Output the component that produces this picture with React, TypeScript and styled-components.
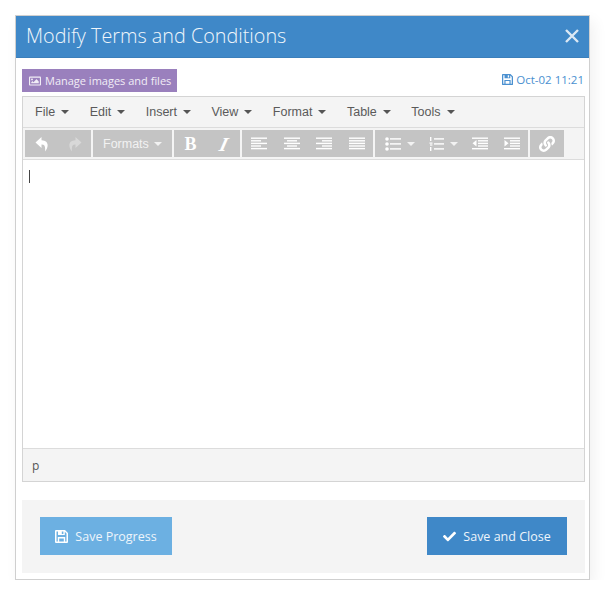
import React from "react";
import styled, { createGlobalStyle } from "styled-components";
import { FaCheck, FaLink, FaRegImage } from "react-icons/fa";

const GlobalStyle = createGlobalStyle`
    html, body {
        margin: 0;
        padding: 0;
        background: #fff;
    }
`;

const Page = styled.div`
    padding: 15px 0 0 15px;
    font-family: "Open Sans", sans-serif;
`;

const Modal = styled.div`
    box-sizing: border-box;
    width: 575px;
    height: 565px;
    border: 1px solid #cfcfcf;
    background: #fff;
    box-shadow: 4px 6px 14px rgba(0, 0, 0, 0.06);
    display: flex;
    flex-direction: column;
`;

const Header = styled.div`
    height: 42px;
    background: #3f88c8;
    border-bottom: 1px solid #3b7fbb;
    box-sizing: border-box;
    display: flex;
    align-items: center;
    justify-content: space-between;
    padding: 0 10px 2px 10px;
`;

const Title = styled.h1`
    margin: 0;
    font-size: 19.8px;
    font-weight: 300;
    line-height: 28px;
    color: #f0f6fb;
`;

const Body = styled.div`
    flex: 1;
    display: flex;
    flex-direction: column;
    padding: 11px 4px 6px 6px;
`;

const TopRow = styled.div`
    display: flex;
    justify-content: space-between;
    height: 23px;
    margin-bottom: 4px;
`;

const ManageButton = styled.div`
    width: 155px;
    background: #9a80bd;
    color: #f1edf6;
    font-size: 11px;
    display: flex;
    align-items: center;
    gap: 4px;
    padding-left: 7px;
    box-sizing: border-box;
    white-space: nowrap;
    svg {
        font-size: 12px;
    }
`;

const Saved = styled.div`
    color: #4a90d0;
    font-size: 11.5px;
    display: flex;
    align-items: center;
    gap: 3px;
    padding-right: 1px;
    padding-bottom: 2px;
`;

const Editor = styled.div`
    box-sizing: border-box;
    height: 386px;
    border: 1px solid #d4d4d4;
    display: flex;
    flex-direction: column;
`;

const MenuBar = styled.div`
    height: 31px;
    background: #f4f4f4;
    border-bottom: 1px solid #dcdcdc;
    box-sizing: border-box;
    display: flex;
    align-items: center;
    padding: 0 0 0 12px;
    gap: 20.5px;
`;

const MenuItem = styled.div`
    font-family: "Liberation Sans", sans-serif;
    font-size: 12.5px;
    color: #5a5a5a;
    display: flex;
    align-items: center;
    gap: 6px;
`;

const Caret = styled.span<{ $color?: string }>`
    display: inline-block;
    width: 0;
    height: 0;
    border-left: 4px solid transparent;
    border-right: 4px solid transparent;
    border-top: 4px solid ${(p) => p.$color || "#555"};
`;

const ToolBar = styled.div`
    height: 32px;
    background: #f4f4f4;
    border-bottom: 1px solid #dcdcdc;
    box-sizing: border-box;
    display: flex;
    gap: 2px;
    padding: 2px 0 0 2px;
`;

const ToolGroup = styled.div`
    height: 27px;
    background: #c4c4c4;
    color: #fff;
    display: flex;
    align-items: center;
`;

const ToolButton = styled.div<{ $width: number }>`
    width: ${(p) => p.$width}px;
    height: 100%;
    display: flex;
    align-items: center;
    justify-content: center;
`;

const SplitButton = styled.div<{ $width: number }>`
    width: ${(p) => p.$width}px;
    height: 100%;
    box-sizing: border-box;
    padding-left: 10px;
    display: flex;
    align-items: center;
    gap: 6px;
`;

const FormatsButton = styled.div`
    width: 79px;
    box-sizing: border-box;
    padding-left: 10px;
    font-family: "Liberation Sans", sans-serif;
    font-size: 12.5px;
    color: #f2f2f2;
    display: flex;
    align-items: center;
    gap: 5px;
`;

const Glyph = styled.span<{ $italic?: boolean }>`
    font-family: "Liberation Serif", serif;
    font-size: ${(p) => (p.$italic ? 20 : 18)}px;
    font-weight: 700;
    font-style: ${(p) => (p.$italic ? "italic" : "normal")};
    color: #fff;
    line-height: 1;
    transform: ${(p) => (p.$italic ? "skewX(-14deg)" : "none")};
`;

const Content = styled.div`
    flex: 1;
    background: #fff;
    padding: 10px 6px;
`;

const Cursor = styled.div`
    width: 1px;
    height: 13px;
    background: #444;
`;

const StatusBar = styled.div`
    height: 33px;
    background: #f4f4f4;
    border-top: 1px solid #dcdcdc;
    box-sizing: border-box;
    display: flex;
    align-items: center;
    padding-left: 9px;
    font-size: 12px;
    color: #555;
`;

const Footer = styled.div`
    margin-top: 18px;
    height: 73px;
    background: #f4f4f4;
    display: flex;
    align-items: flex-start;
    justify-content: space-between;
    padding: 17px 18px 0 18px;
    box-sizing: border-box;
`;

const FooterButton = styled.div<{ $bg: string; $width: number }>`
    width: ${(p) => p.$width}px;
    height: 38px;
    background: ${(p) => p.$bg};
    color: #eef5fb;
    font-size: 12.5px;
    display: flex;
    align-items: center;
    justify-content: center;
    gap: 7px;
    svg {
        font-size: 13px;
        color: #fff;
    }
`;

const CloseIcon = () => (
    <svg width="14" height="14" viewBox="0 0 14 14">
        <path d="M1 1 L13 13 M13 1 L1 13" stroke="#dbe8f4" strokeWidth="2.4" />
    </svg>
);

const SaveIcon = ({ size = 13 }: { size?: number }) => (
    <svg width={size} height={size} viewBox="0 0 13 13" fill="currentColor">
        <path
            fillRule="evenodd"
            d="M1 0 H10 L13 3 V12 A1 1 0 0 1 12 13 H1 A1 1 0 0 1 0 12 V1 A1 1 0 0 1 1 0 Z M1.5 1.5 V11.5 H2.8 V7 H10.2 V11.5 H11.5 V3.6 L9.8 1.8 V5 H3 V1.5 Z M4.2 8.4 V11.5 H8.8 V8.4 Z M6.8 1.6 V4 H8.4 V1.6 Z"
        />
    </svg>
);

const Undo = ({ flip }: { flip?: boolean }) => (
    <svg width="14" height="16" viewBox="0 0 14 16" style={flip ? { transform: "scaleX(-1)" } : undefined}>
        <path d="M6.5 1 L0.5 6.6 L6.5 12 V8.6 C9.6 8.4 10.6 10.6 10 15.5 C13.8 11 14.2 4.6 6.5 4.2 Z" fill="#fff" />
    </svg>
);

// x1,x2 pairs for each of the horizontal strokes in an alignment icon
const Lines = ({ rows }: { rows: [number, number][] }) => (
    <svg width="16" height="14" viewBox="0 0 16 14">
        {rows.map(([a, b], i) => (
            <rect key={i} x={a} y={i * 2.6 + 0.5} width={b - a} height="1.4" fill="#fff" />
        ))}
    </svg>
);

const BulletList = () => (
    <svg width="16" height="14" viewBox="0 0 16 14" fill="#fff">
        <circle cx="2" cy="2" r="1.8" />
        <circle cx="2" cy="7" r="1.8" />
        <circle cx="2" cy="12" r="1.8" />
        <rect x="5" y="1.2" width="11" height="1.4" />
        <rect x="5" y="6.2" width="11" height="1.4" />
        <rect x="5" y="11.2" width="11" height="1.4" />
    </svg>
);

const NumberList = () => (
    <svg width="15" height="14" viewBox="0 0 15 14" fill="#fff">
        <rect x="1" y="0" width="1.4" height="4" />
        <rect x="0.5" y="5.5" width="3" height="1.2" />
        <rect x="1" y="7.4" width="2.4" height="1.2" />
        <rect x="1" y="10" width="1.4" height="4" />
        <rect x="5" y="1.2" width="10" height="1.4" />
        <rect x="5" y="6.2" width="10" height="1.4" />
        <rect x="5" y="11.2" width="10" height="1.4" />
    </svg>
);

const Indent = ({ out }: { out?: boolean }) => (
    <svg width="16" height="14" viewBox="0 0 16 14" fill="#fff">
        <rect x="0" y="0.5" width="16" height="1.4" />
        <rect x="6" y="3.1" width="10" height="1.4" />
        <rect x="6" y="5.7" width="10" height="1.4" />
        <rect x="6" y="8.3" width="10" height="1.4" />
        <rect x="0" y="11" width="16" height="1.4" />
        <path d={out ? "M4.5 3 V9.5 L0.5 6.2 Z" : "M0.5 3 V9.5 L4.5 6.2 Z"} />
    </svg>
);

const Dimmed = styled.span`
    display: flex;
    opacity: 0.35;
`;

const menus = ["File", "Edit", "Insert", "View", "Format", "Table", "Tools"];

const App = (): JSX.Element => (
    <Page>
        <GlobalStyle />
        <Modal>
            <Header>
                <Title>Modify Terms and Conditions</Title>
                <CloseIcon />
            </Header>
            <Body>
                <TopRow>
                    <ManageButton>
                        <FaRegImage />
                        Manage images and files
                    </ManageButton>
                    <Saved>
                        <SaveIcon size={11} />
                        Oct-02 11:21
                    </Saved>
                </TopRow>
                <Editor>
                    <MenuBar>
                        {menus.map((m) => (
                            <MenuItem key={m}>
                                {m}
                                <Caret />
                            </MenuItem>
                        ))}
                    </MenuBar>
                    <ToolBar>
                        <ToolGroup>
                            <ToolButton $width={33}><Undo /></ToolButton>
                            <ToolButton $width={33}><Dimmed><Undo flip /></Dimmed></ToolButton>
                        </ToolGroup>
                        <ToolGroup>
                            <FormatsButton>
                                Formats
                                <Caret $color="#f2f2f2" />
                            </FormatsButton>
                        </ToolGroup>
                        <ToolGroup>
                            <ToolButton $width={33}><Glyph>B</Glyph></ToolButton>
                            <ToolButton $width={33}><Glyph $italic>I</Glyph></ToolButton>
                        </ToolGroup>
                        <ToolGroup>
                            <ToolButton $width={33}><Lines rows={[[0, 16], [0, 10], [0, 16], [0, 10], [0, 16]]} /></ToolButton>
                            <ToolButton $width={33}><Lines rows={[[0, 16], [3, 13], [0, 16], [3, 13], [0, 16]]} /></ToolButton>
                            <ToolButton $width={32}><Lines rows={[[0, 16], [6, 16], [0, 16], [6, 16], [0, 16]]} /></ToolButton>
                            <ToolButton $width={33}><Lines rows={[[0, 16], [0, 16], [0, 16], [0, 16], [0, 16]]} /></ToolButton>
                        </ToolGroup>
                        <ToolGroup>
                            <SplitButton $width={44}><BulletList /><Caret $color="#f2f2f2" /></SplitButton>
                            <SplitButton $width={45}><NumberList /><Caret $color="#f2f2f2" /></SplitButton>
                            <ToolButton $width={32}><Indent out /></ToolButton>
                            <ToolButton $width={32}><Indent /></ToolButton>
                        </ToolGroup>
                        <ToolGroup>
                            <ToolButton $width={34}><FaLink size={16} /></ToolButton>
                        </ToolGroup>
                    </ToolBar>
                    <Content>
                        <Cursor />
                    </Content>
                    <StatusBar>p</StatusBar>
                </Editor>
                <Footer>
                    <FooterButton $bg="#6cb0e2" $width={132}>
                        <SaveIcon />
                        Save Progress
                    </FooterButton>
                    <FooterButton $bg="#3f88c8" $width={140}>
                        <FaCheck />
                        Save and Close
                    </FooterButton>
                </Footer>
            </Body>
        </Modal>
    </Page>
);

export default App;
